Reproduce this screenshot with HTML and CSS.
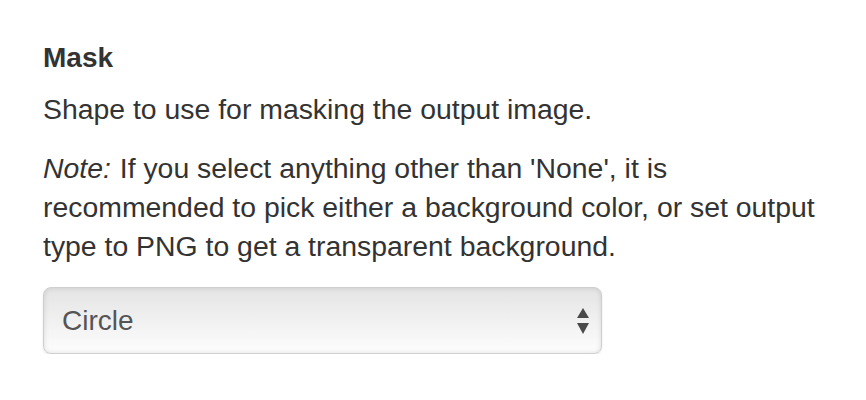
FILE: index.html
```html
<!DOCTYPE html>
<html>
<head>
<meta charset="utf-8">
<link rel="stylesheet" href="styles.css">
</head>
<body>
<div class="field">
  <h3 class="label">Mask</h3>
  <p class="help">Shape to use for masking the output image.</p>
  <p class="help note"><em>Note:</em> If you select anything other than 'None', it is recommended to pick either a background color, or set output type to PNG to get a transparent background.</p>
  <div class="select">
    <span class="value">Circle</span>
    <svg class="arrows" width="12" height="26" viewBox="0 0 12 26"><path d="M6 0 L12 10 L0 10 Z" fill="#4a4a4a"/><path d="M6 26 L12 15 L0 15 Z" fill="#4a4a4a"/></svg>
  </div>
</div>
</body>
</html>
```

FILE: styles.css
```css
html, body {
  margin: 0;
  padding: 0;
  background: #fff;
}
body {
  font-family: "Liberation Sans", Arial, sans-serif;
  color: #333;
}
.field {
  padding: 39px 0 0 43px;
  width: 800px;
}
.label {
  margin: 0;
  font-size: 28px;
  font-weight: bold;
  line-height: 38px;
}
.help {
  margin: 13px 0 0 0;
  font-size: 28.4px;
  line-height: 39px;
}
.note {
  margin-top: 20px;
}
.note em {
  padding-right: 1px;
}
.select {
  margin-top: 21px;
  width: 559px;
  height: 67px;
  box-sizing: border-box;
  border: 1px solid #cfcfcf;
  border-radius: 8px;
  background: linear-gradient(#e4e4e4, #fdfdfd);
  box-shadow: inset 0 0 5px rgba(0,0,0,0.12), 0 1px 2px rgba(0,0,0,0.12);
  display: flex;
  align-items: center;
  justify-content: space-between;
  padding: 0 12px 0 18px;
}
.value {
  font-size: 28px;
  color: #555;
}
.arrows {
  display: block;
}
```
